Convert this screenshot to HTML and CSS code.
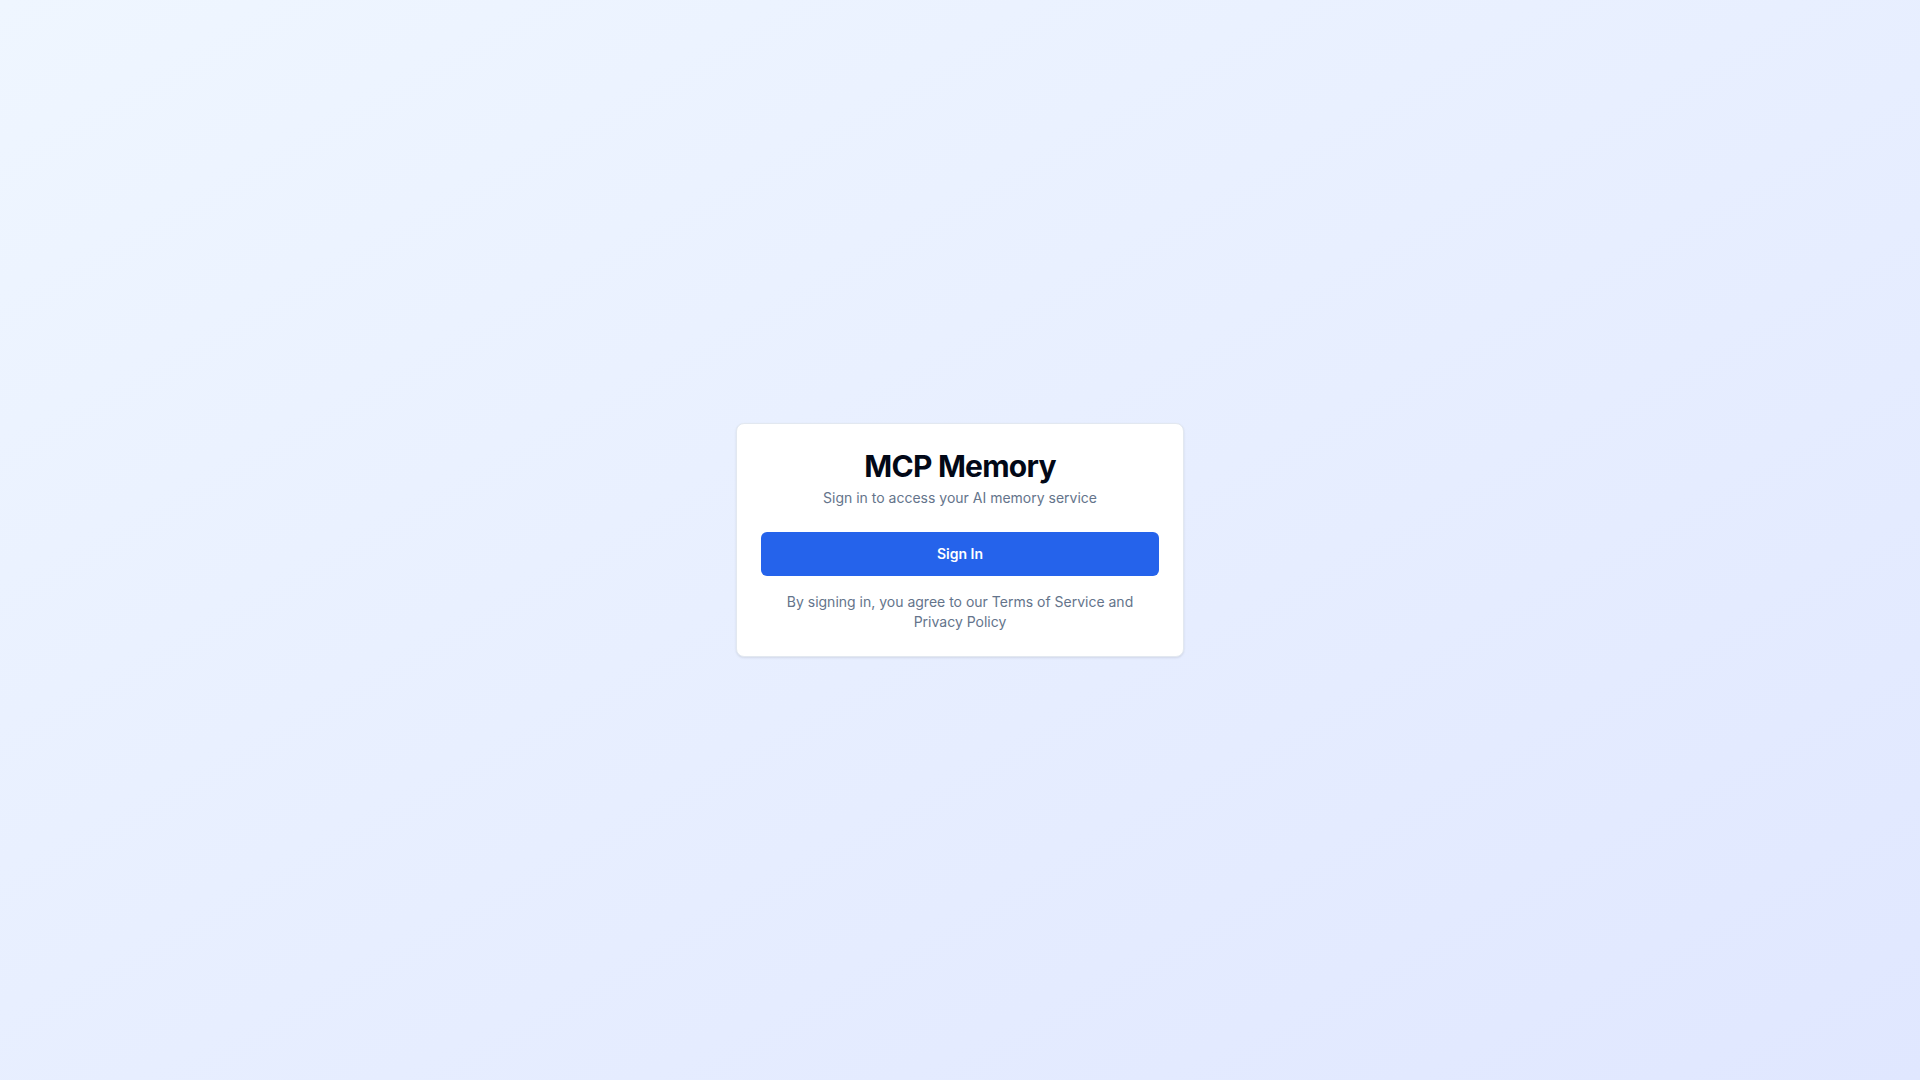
FILE: index.html
```html
<!DOCTYPE html>
<html lang="en">
<head>
<meta charset="utf-8">
<title>MCP Memory</title>
<link rel="stylesheet" href="styles.css">
</head>
<body>
<main class="page">
  <div class="card">
    <div class="header">
      <h1 class="title">MCP Memory</h1>
      <p class="subtitle">Sign in to access your AI memory service</p>
    </div>
    <button class="btn" type="button">Sign In</button>
    <p class="legal">By signing in, you agree to our Terms of Service and Privacy Policy</p>
  </div>
</main>
</body>
</html>
```

FILE: styles.css
```css
* { box-sizing: border-box; }
html, body { margin: 0; padding: 0; }
body {
  font-family: Inter, "Noto Sans", "Liberation Sans", sans-serif;
  background: linear-gradient(to bottom right, #eff6ff, #e0e7ff);
  min-height: 100vh;
}
.page {
  min-height: 100vh;
  display: flex;
  align-items: center;
  justify-content: center;
}
.card {
  width: 448px;
  background: #ffffff;
  border: 1px solid #e2e8f0;
  border-radius: 8px;
  box-shadow: 0 1px 3px rgba(0,0,0,0.06), 0 1px 2px rgba(0,0,0,0.04);
  padding: 24px;
  display: flex;
  flex-direction: column;
  gap: 24px;
  text-align: center;
}
.header { display: flex; flex-direction: column; gap: 4px; }
.title {
  margin: 0;
  font-size: 30px;
  line-height: 36px;
  font-weight: 700;
  color: #020817;
  letter-spacing: -0.75px;
}
.subtitle {
  margin: 0;
  font-size: 14px;
  line-height: 20px;
  color: #64748b;
}
.btn {
  height: 44px;
  border: none;
  border-radius: 6px;
  background: #2563eb;
  color: #ffffff;
  font-family: inherit;
  font-size: 14px;
  font-weight: 600;
  line-height: 20px;
}
.legal {
  margin: -8px 0 0;
  font-size: 14px;
  line-height: 20px;
  color: #64748b;
}
```
